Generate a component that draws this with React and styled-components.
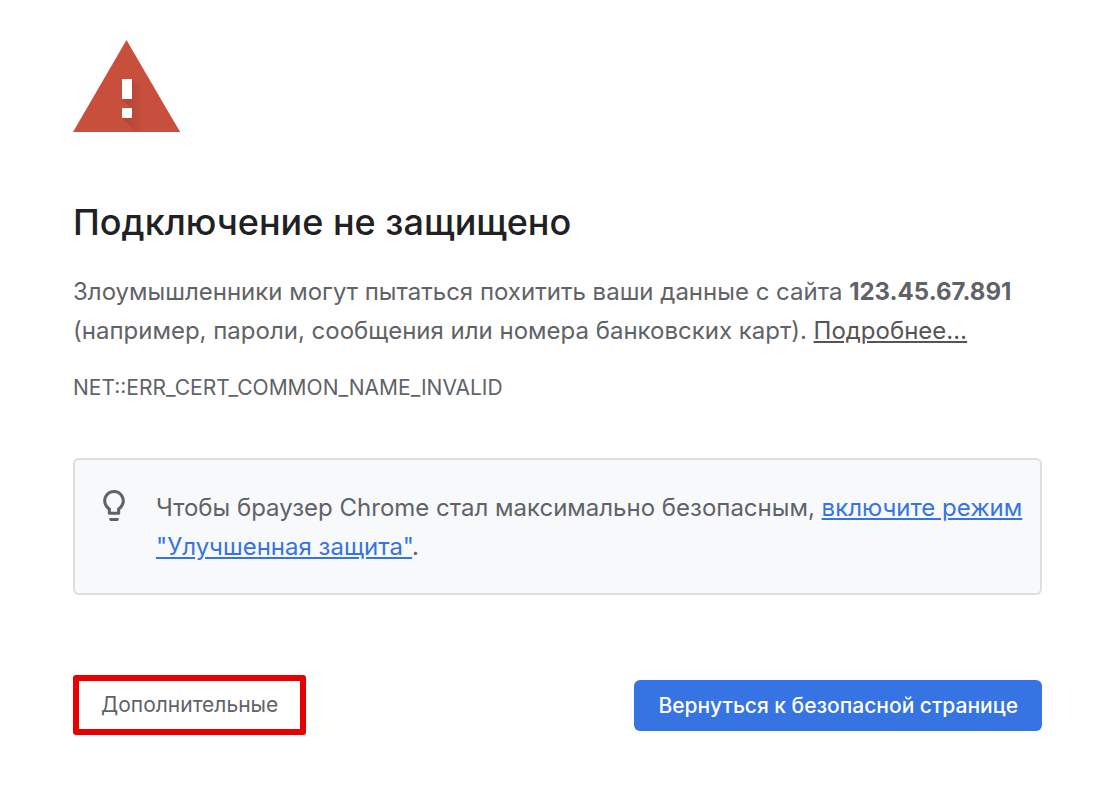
import React from 'react'
import styled, { createGlobalStyle } from 'styled-components'

const GlobalStyle = createGlobalStyle`
  * {
    box-sizing: border-box;
  }

  body {
    margin: 0;
    background: #fff;
    color: #5f6368;
    font-family: Inter, "Liberation Sans", sans-serif;
    font-size: 24px;
    line-height: 39px;
  }
`

const Page = styled.main`
  padding: 40px 58px 52px 73px;
`

const WarningIcon = styled.svg`
  display: block;
  width: 107px;
  height: 93px;
`

const Title = styled.h1`
  margin: 66px 0 0;
  color: #202124;
  font-size: 36px;
  font-weight: 500;
  line-height: 46px;
`

const Message = styled.p`
  margin: 27px 0 0;
`

const ErrorCode = styled.p`
  margin: 24px 0 0;
  font-size: 21px;
  line-height: 28px;
`

const TextLink = styled.a`
  color: ${props => (props.$primary ? '#3574e2' : '#555')};
  text-decoration: underline;
`

const Promo = styled.section`
  display: flex;
  align-items: flex-start;
  margin-top: 56px;
  padding: 28px 12px 27px 28px;
  border: 2px solid #dddee0;
  border-radius: 6px;
  background: #f8f9fb;
`

const BulbIcon = styled.svg`
  flex: none;
  width: 22px;
  height: 31px;
  margin: 2px 31px 0 0;
  fill: #5f6368;
`

const PromoText = styled.p`
  margin: 0;
`

const Actions = styled.div`
  display: flex;
  align-items: center;
  justify-content: space-between;
  margin-top: 80px;
`

const Button = styled.button`
  padding: 0 24px;
  border: none;
  border-radius: 6px;
  background: #3574e2;
  color: #fff;
  font: 500 21px/51px Inter, "Liberation Sans", sans-serif;
  cursor: pointer;
`

const DetailsButton = styled(Button)`
  padding: 0 22px;
  border: 6px solid #e60000;
  border-radius: 3px;
  background: #fff;
  color: #5f6368;
  font-weight: 400;
  line-height: 48px;
`

const App = () => (
  <Page>
    <GlobalStyle />
    <WarningIcon viewBox="0 0 107 93" aria-hidden="true">
      <defs>
        <linearGradient id="shade" gradientUnits="userSpaceOnUse" x1="49" y1="0" x2="75" y2="0">
          <stop offset="0" stopColor="#b34737" />
          <stop offset="0.4" stopColor="#b94939" />
          <stop offset="0.8" stopColor="#c64e3d" />
          <stop offset="1" stopColor="#c74f3d" />
        </linearGradient>
        <clipPath id="triangle">
          <path d="M53.500 0L107 92H0z" />
        </clipPath>
      </defs>
      <path d="M53.500 0L107 92H0z" fill="#c94f3d" />
      <path d="M59 39l48 48v5H63L49 78V68h9l-9-9z" fill="url(#shade)" clipPath="url(#triangle)" />
      <path d="M49 39h10v20H49zM49 68h10v10H49z" fill="#fff" />
    </WarningIcon>
    <Title>Подключение не защищено</Title>
    <Message>
      Злоумышленники могут пытаться похитить ваши данные с сайта <strong>123.45.67.891</strong>
      {' '}(например, пароли, сообщения или номера банковских карт).{' '}
      <TextLink href="#details">Подробнее…</TextLink>
    </Message>
    <ErrorCode>NET::ERR_CERT_COMMON_NAME_INVALID</ErrorCode>
    <Promo>
      <BulbIcon viewBox="5 2 14 20" aria-hidden="true">
        <path d="M9 21c0 .55.45 1 1 1h4c.55 0 1-.45 1-1v-1H9v1zm3-19C8.14 2 5 5.14 5 9c0 2.380 1.190 4.470 3 5.740V17c0 .55.45 1 1 1h6c.55 0 1-.45 1-1v-2.260c1.810-1.270 3-3.360 3-5.740 0-3.860-3.140-7-7-7zm2.850 11.100l-.85.6V16h-4v-2.300l-.85-.6A4.997 4.997 0 0 1 7 9c0-2.760 2.240-5 5-5s5 2.240 5 5c0 1.630-.8 3.160-2.150 4.100z" />
      </BulbIcon>
      <PromoText>
        Чтобы браузер Chrome стал максимально безопасным,{' '}
        <TextLink $primary href="#protection">включите режим "Улучшенная защита"</TextLink>.
      </PromoText>
    </Promo>
    <Actions>
      <DetailsButton type="button">Дополнительные</DetailsButton>
      <Button type="button">Вернуться к безопасной странице</Button>
    </Actions>
  </Page>
)

export default App
